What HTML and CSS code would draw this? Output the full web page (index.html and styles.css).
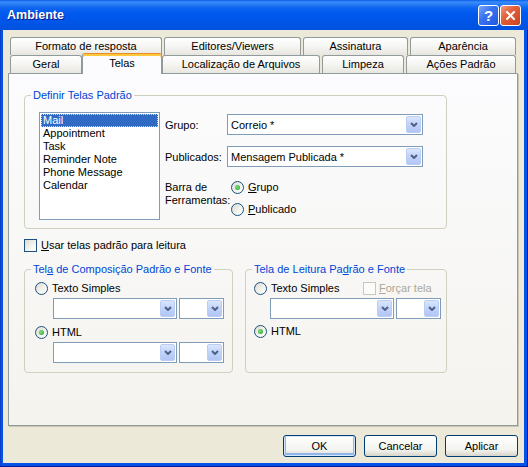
FILE: index.html
```html
<!DOCTYPE html>
<html>

<head>
  <meta charset="utf-8">
  <title>Ambiente</title>
  <link rel="stylesheet" href="styles.css">
</head>

<body>
  <div class="window">
    <div class="titlebar">
      <span class="title">Ambiente</span>
      <span class="cap help">?</span>
      <span class="cap close">
        <svg width="9" height="9" viewBox="0 0 9 9"><path d="M1 1L8 8M8 1L1 8" /></svg>
      </span>
    </div>
    <div class="client">
      <div class="tabs">
        <div class="tabrow">
          <span class="tab tab-formato">Formato de resposta</span>
          <span class="tab tab-editores">Editores/Viewers</span>
          <span class="tab tab-assinatura">Assinatura</span>
          <span class="tab tab-aparencia">Aparência</span>
        </div>
        <div class="tabrow">
          <span class="tab tab-geral">Geral</span>
          <span class="tab tab-telas sel">Telas</span>
          <span class="tab tab-local">Localização de Arquivos</span>
          <span class="tab tab-limpeza">Limpeza</span>
          <span class="tab tab-acoes">Ações Padrão</span>
        </div>
      </div>
      <div class="panel">
        <fieldset class="grp grp-main">
          <legend>Definir Telas Padrão</legend>
          <div class="main-body">
            <ul class="list">
              <li class="on"><span>Mail</span></li>
              <li>Appointment</li>
              <li>Task</li>
              <li>Reminder Note</li>
              <li>Phone Message</li>
              <li>Calendar</li>
            </ul>
            <div class="form">
              <span class="lbl">Grupo:</span>
              <div class="combo"><span class="val">Correio *</span><span class="drop"><svg width="8" height="5" viewBox="0 0 8 5"><polyline points="1,1 4,4 7,1" /></svg></span></div>
              <span class="lbl">Publicados:</span>
              <div class="combo"><span class="val">Mensagem Publicada *</span><span class="drop"><svg width="8" height="5" viewBox="0 0 8 5"><polyline points="1,1 4,4 7,1" /></svg></span></div>
              <span class="lbl lbl-multi">Barra de<br>Ferramentas:</span>
              <div class="radios">
                <span class="radio checked"><i></i><span><u>G</u>rupo</span></span>
                <span class="radio"><i></i><span><u>P</u>ublicado</span></span>
              </div>
            </div>
          </div>
        </fieldset>

        <span class="check"><i></i><span><u>U</u>sar telas padrão para leitura</span></span>

        <div class="pair">
          <fieldset class="grp grp-compose">
            <legend>Tel<u>a</u> de Composição Padrão e Fonte</legend>
            <div class="sub-body">
              <span class="radio"><i></i><span>Texto Simples</span></span>
              <div class="combos">
                <div class="combo wide"><span class="val"></span><span class="drop"><svg width="8" height="5" viewBox="0 0 8 5"><polyline points="1,1 4,4 7,1" /></svg></span></div>
                <div class="combo narrow"><span class="val"></span><span class="drop"><svg width="8" height="5" viewBox="0 0 8 5"><polyline points="1,1 4,4 7,1" /></svg></span></div>
              </div>
              <span class="radio checked second"><i></i><span>HTML</span></span>
              <div class="combos">
                <div class="combo wide"><span class="val"></span><span class="drop"><svg width="8" height="5" viewBox="0 0 8 5"><polyline points="1,1 4,4 7,1" /></svg></span></div>
                <div class="combo narrow"><span class="val"></span><span class="drop"><svg width="8" height="5" viewBox="0 0 8 5"><polyline points="1,1 4,4 7,1" /></svg></span></div>
              </div>
            </div>
          </fieldset>
          <fieldset class="grp grp-read">
            <legend>Tela de Leitura Pa<u>d</u>rão e Fonte</legend>
            <div class="sub-body">
              <div class="first-line">
                <span class="radio opt-texto"><i></i><span>Texto Simples</span></span>
                <span class="check disabled"><i></i><span><u>F</u>orçar tela</span></span>
              </div>
              <div class="combos">
                <div class="combo wide"><span class="val"></span><span class="drop"><svg width="8" height="5" viewBox="0 0 8 5"><polyline points="1,1 4,4 7,1" /></svg></span></div>
                <div class="combo narrow"><span class="val"></span><span class="drop"><svg width="8" height="5" viewBox="0 0 8 5"><polyline points="1,1 4,4 7,1" /></svg></span></div>
              </div>
              <span class="radio checked second"><i></i><span>HTML</span></span>
            </div>
          </fieldset>
        </div>
      </div>
      <div class="buttons">
        <span class="btn default">OK</span>
        <span class="btn">Cancelar</span>
        <span class="btn">Aplicar</span>
      </div>
    </div>
  </div>
</body>

</html>
```

FILE: styles.css
```css
html,
body {
  margin: 0;
  width: 100%;
  height: 100%;
}

body {
  font-family: "Liberation Sans", Arial, sans-serif;
  font-size: 11px;
  color: #000;
  background: #fff;
}

.window {
  width: 528px;
  height: 467px;
  display: flex;
  flex-direction: column;
  background: #0553e6;
  box-shadow: inset -1px -1px 0 #001c9e, inset 1px 0 0 #0a3fc8;
}

/* title bar */
.titlebar {
  height: 30px;
  flex: none;
  display: flex;
  align-items: flex-start;
  padding-top: 5px;
  box-sizing: border-box;
  background: linear-gradient(#0a5de8 0, #3b8cf9 2px, #2b7ff5 4px, #0c64f0 8px, #0058ee 14px, #0055e5 24px, #0050dc 30px);
}

.title {
  margin: 3px 0 0 7px;
  font-weight: bold;
  font-size: 12.5px;
  color: #fff;
  text-shadow: 1px 1px 0 #0a1883;
  flex: 1;
}

.cap {
  width: 21px;
  height: 21px;
  box-sizing: border-box;
  border: 1px solid #fff;
  border-radius: 3px;
  display: flex;
  align-items: center;
  justify-content: center;
  color: #fff;
}

.help {
  margin-right: 1px;
  font-weight: bold;
  font-size: 15px;
  background: linear-gradient(135deg, #7ca5fa 0%, #3a74f0 40%, #1f57e3 100%);
}

.close {
  margin-right: 7px;
  background: linear-gradient(135deg, #f09a7c 0%, #e2603a 40%, #cc4220 100%);
}

.close path {
  stroke: #fff;
  stroke-width: 2;
  stroke-linecap: square;
}

/* client area */
.client {
  flex: 1;
  margin: 0 4px 4px 3px;
  padding: 7px 6px 0 5px;
  background: #ece9d8;
}

.tabs {
  margin: 0 2px;
}

.tabrow {
  display: flex;
  height: 18px;
}

.tab {
  box-sizing: border-box;
  height: 18px;
  margin-right: 2px;
  border: 1px solid #919b9c;
  border-bottom: 0;
  border-radius: 3px 3px 0 0;
  background: linear-gradient(#ffffff, #f5f5f2 50%, #e7e6df);
  text-align: center;
  line-height: 17px;
  white-space: nowrap;
}

.tab:last-child {
  margin-right: 0;
}

.tab-formato { width: 152px; }
.tab-editores { width: 137px; }
.tab-assinatura { width: 105px; }
.tab-aparencia { width: 106px; }
.tab-geral { width: 72px; }
.tab-telas { width: 76px; }
.tab-local { width: 158px; }
.tab-limpeza { width: 82px; }
.tab-acoes { width: 110px; }

.tab.sel {
  position: relative;
  z-index: 1;
  width: 80px;
  height: 21px;
  margin: -2px 0 0 -2px;
  background: #fcfcfe;
  border-top-color: #e68b2c;
  box-shadow: inset 0 2px 0 #ffc73c;
  line-height: 19px;
}

.panel {
  height: 353px;
  box-sizing: border-box;
  padding: 15px 0 0 15px;
  border: 1px solid #919b9c;
  box-shadow: 1px 1px 0 #c9c6b6;
  background: linear-gradient(#fcfcfe, #f4f3ee);
}

/* group boxes */
.grp {
  margin: 0;
  padding: 0;
  box-sizing: border-box;
  border: 1px solid #d0d0bf;
  border-radius: 4px;
}

.grp legend {
  margin-left: 6px;
  padding: 0 2px;
  line-height: 13px;
  color: #0046d5;
}

.grp-main {
  width: 423px;
}

.main-body {
  display: flex;
  align-items: flex-start;
  padding: 10px 0 8px 14px;
}

.list {
  list-style: none;
  margin: 0;
  padding: 1px;
  width: 121px;
  height: 108px;
  box-sizing: border-box;
  border: 1px solid #7f9db9;
  background: #fff;
}

.list li {
  height: 13px;
  line-height: 13px;
  padding-left: 2px;
  white-space: nowrap;
}

.list li.on {
  padding-left: 0;
  background: #316ac5;
  color: #fff;
}

.list li.on span {
  display: block;
  height: 13px;
  box-sizing: border-box;
  padding-left: 1px;
  line-height: 11px;
  border: 1px dotted #f3d58f;
}

.form {
  margin: 2px 0 0 5px;
  display: grid;
  grid-template-columns: 62px 196px;
  grid-template-rows: 21px 21px auto;
  row-gap: 11px;
  align-items: center;
}

.lbl-multi {
  align-self: start;
  padding-top: 3px;
  line-height: 13px;
}

.radios {
  align-self: start;
  padding: 3px 0 0 4px;
  display: flex;
  flex-direction: column;
  gap: 9px;
}

/* combo box */
.combo {
  display: flex;
  align-items: center;
  height: 21px;
  box-sizing: border-box;
  border: 1px solid #7f9db9;
  background: #fff;
  padding: 1px;
}

.combo .val {
  flex: 1;
  padding-left: 2px;
  white-space: nowrap;
}

.drop {
  width: 15px;
  height: 17px;
  box-sizing: border-box;
  display: flex;
  align-items: center;
  justify-content: center;
  border: 1px solid #bccdf5;
  border-radius: 2px;
  background: linear-gradient(#dbe6fd, #c1d3fa 50%, #b1c6f5);
}

.drop polyline {
  fill: none;
  stroke: #4d6185;
  stroke-width: 2;
}

/* radio and check */
.radio,
.check {
  display: flex;
  align-items: center;
  gap: 4px;
  height: 13px;
  line-height: 13px;
  white-space: nowrap;
}

.radio i,
.check i {
  flex: none;
  width: 13px;
  height: 13px;
  box-sizing: border-box;
  border: 1px solid #1c5180;
  background: linear-gradient(135deg, #dcdbd3, #f4f4f0 60%, #ffffff);
  display: flex;
  align-items: center;
  justify-content: center;
}

.radio i {
  border-radius: 50%;
}

.radio.checked i::after {
  content: '';
  width: 5px;
  height: 5px;
  border-radius: 50%;
  background: radial-gradient(circle at 40% 40%, #7fe07f, #21a121);
}

.check {
  margin-top: 10px;
  width: max-content;
}

.check.disabled {
  margin-top: 0;
  gap: 3px;
  color: #aca899;
}

.check.disabled i {
  border-color: #cac8bb;
  background: #fbfbf9;
}

.pair {
  display: flex;
  gap: 12px;
  margin-top: 11px;
}

.grp-compose {
  width: 209px;
  height: 110px;
}

.grp-read {
  width: 202px;
  height: 110px;
}

.sub-body {
  padding: 6px 0 0 10px;
}

.grp-read .sub-body {
  padding-left: 8px;
}

.combos {
  display: flex;
  gap: 2px;
  margin: 3px 0 0 18px;
}

.grp-read .combos {
  margin-left: 16px;
}

.combo.wide {
  width: 124px;
}

.combo.narrow {
  width: 45px;
}

.radio.second {
  margin-top: 7px;
}

.grp-read .radio.second {
  margin-top: 6px;
}

.first-line {
  display: flex;
  align-items: center;
}

.opt-texto {
  width: 109px;
}

/* buttons */
.buttons {
  display: flex;
  justify-content: flex-end;
  gap: 8px;
  margin-top: 9px;
}

.btn {
  width: 73px;
  height: 22px;
  box-sizing: border-box;
  border: 1px solid #003c74;
  border-radius: 3px;
  background: linear-gradient(#ffffff, #f3f3ef 70%, #d8d4c9);
  display: flex;
  align-items: center;
  justify-content: center;
}

.btn.default {
  box-shadow: inset 0 0 0 1px #cee7ff, inset 0 -1px 0 2px #94b4ea;
}
```
